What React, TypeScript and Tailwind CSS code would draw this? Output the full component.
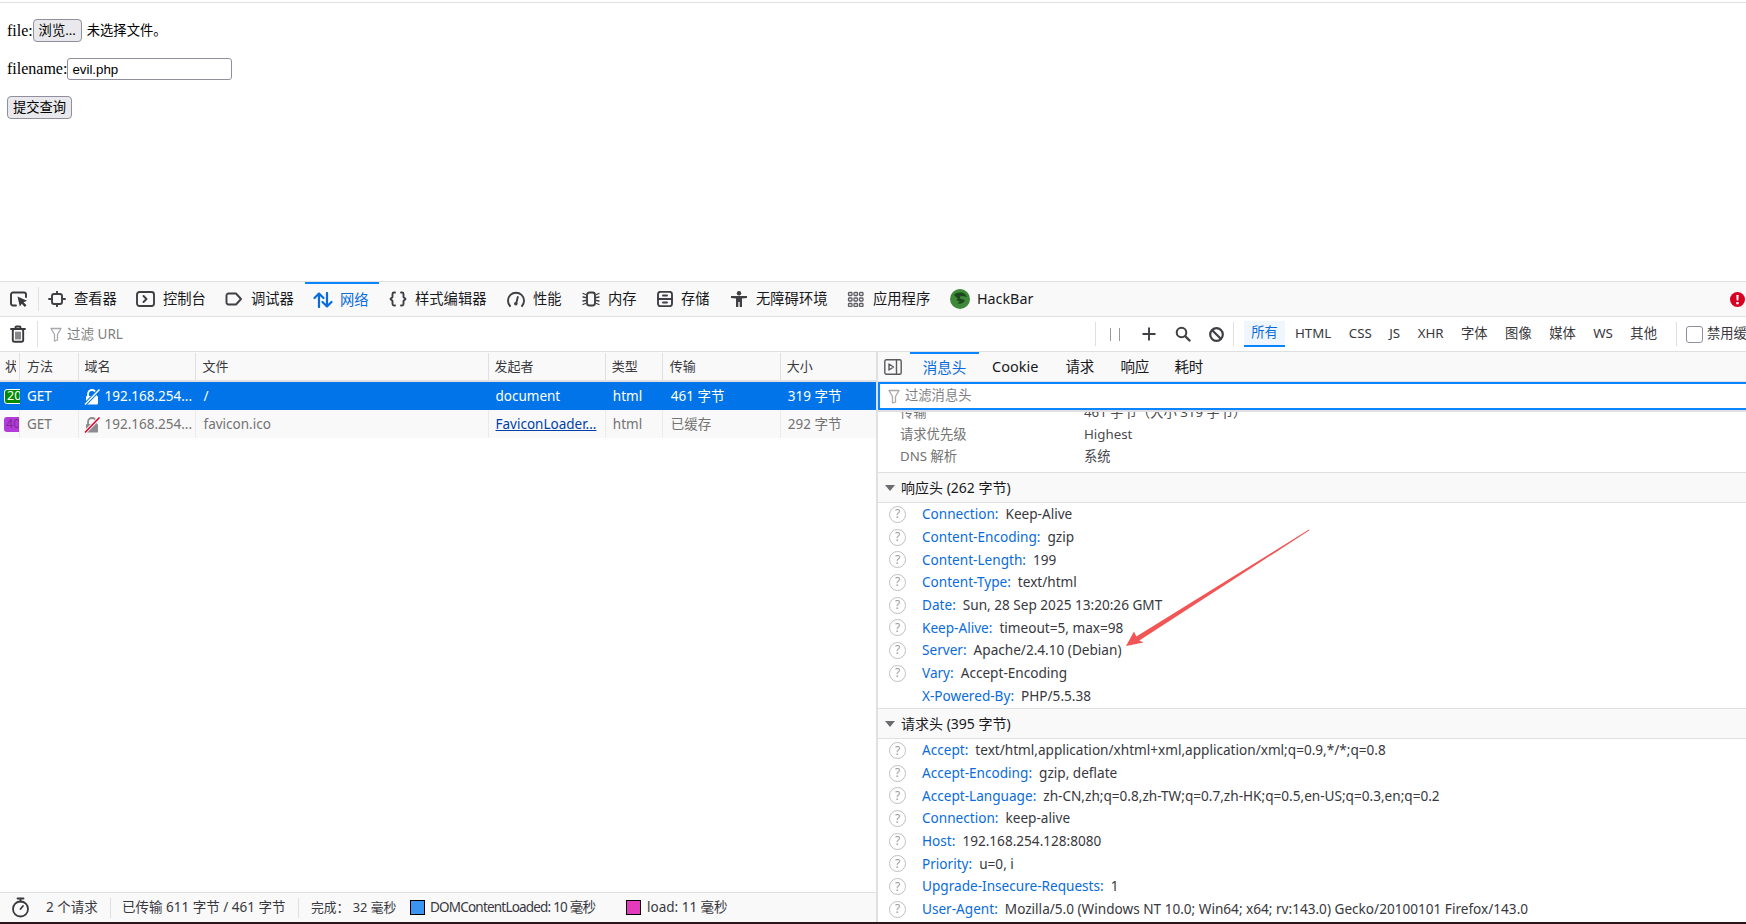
import type { ReactNode } from 'react';

const ui = "font-['Noto_Sans','Noto_Sans_CJK_SC',sans-serif]";

function Ico({ w = 18, h = 16, vw = 18, vh = 16, className = 'text-[#3f3f44]', children }: { w?: number; h?: number; vw?: number; vh?: number; className?: string; children: ReactNode }) {
  return (
    <svg width={w} height={h} viewBox={`0 0 ${vw} ${vh}`} fill="none" stroke="currentColor" strokeWidth="1.900" strokeLinecap="round" strokeLinejoin="round" className={`shrink-0 ${className}`}>
      {children}
    </svg>
  );
}

const InspectorIcon = () => (
  <Ico>
    <rect x="4" y="3" width="10" height="10" rx="2" />
    <path d="M9 0.500V3M9 13v2.500M1 8h3M14 8h3" />
  </Ico>
);
const ConsoleIcon = () => (
  <Ico w={19} vw={19}>
    <rect x="1" y="1" width="17" height="14" rx="2.500" />
    <path d="M7.500 5l3 3-3 3" />
  </Ico>
);
const DebuggerIcon = () => (
  <Ico>
    <path d="M3.500 2.500h7.500l5 5.500-5 5.500H3.500a2 2 0 0 1-2-2v-7a2 2 0 0 1 2-2z" />
  </Ico>
);
const NetworkIcon = () => (
  <Ico w={20} vw={20} className="text-[#0a6cdc]">
    <g strokeWidth="2.200">
      <path d="M6 15V1.500M1.500 6L6 1.500 10.500 6" />
      <path d="M14 1v13.500M9.500 10l4.500 4.500 4.500-4.500" />
    </g>
  </Ico>
);
const StyleIcon = () => (
  <Ico>
    <path d="M6 1.500H5a1.500 1.500 0 0 0-1.500 1.500v3L1.500 8l2 2v3A1.500 1.500 0 0 0 5 14.500h1" />
    <path d="M12 1.500h1A1.500 1.500 0 0 1 14.500 3v3l2 2-2 2v3a1.500 1.500 0 0 1-1.500 1.500h-1" />
  </Ico>
);
const PerfIcon = () => (
  <Ico>
    <path d="M3 15a8 8 0 1 1 12 0" />
    <path d="M10.800 6l-1.500 6" />
    <circle cx="8.800" cy="12.800" r="1.800" fill="currentColor" stroke="none" />
  </Ico>
);
const MemoryIcon = () => (
  <Ico>
    <rect x="5" y="1.500" width="8" height="13" rx="2.500" />
    <path strokeWidth="1.300" d="M3.500 3.500L1 2.500M3.500 6.500L1 6M3.500 9.500L1 10M3.500 12.500L1 13.500M14.500 3.500l2.500-1M14.500 6.500L17 6M14.500 9.500l2.500.5M14.500 12.500l2.500 1" />
  </Ico>
);
const StorageIcon = () => (
  <Ico w={16} vw={16}>
    <rect x="1" y="0.800" width="14" height="14.400" rx="2.500" />
    <path d="M1 8h14M6 4.500h4M6 11.500h4" />
  </Ico>
);
const AccessIcon = () => (
  <Ico>
    <circle cx="9" cy="2.300" r="2.200" fill="currentColor" stroke="none" />
    <path fill="currentColor" stroke="none" d="M1 5h16v2l-5 .5V16h-2.300v-5H8.300v5H6V7.500L1 7z" />
  </Ico>
);
const AppIcon = () => (
  <Ico className="text-[#5f5f64]">
    <g strokeWidth="1.300">
      {[1.500, 7, 12.500].map((y) =>
        [1.500, 7, 12.500].map((x) => <rect key={`${x}-${y}`} x={x} y={y} width="3.500" height="3" rx="0.800" />),
      )}
    </g>
  </Ico>
);
const HackBarIcon = () => (
  <svg width="20" height="20" viewBox="0 0 20 20" className="shrink-0">
    <circle cx="10" cy="10" r="10" fill="#3f8a3a" />
    <path d="M4 6c3-3 8-3 11-1l2 3-5-1c-2 0-3 2-1 3l4 1c-1 3-5 5-8 3l3-1-4-2 2-1-4-4z" fill="#1c4a1d" />
  </svg>
);
const PickIcon = () => (
  <Ico w={18} h={16} vw={18} vh={16} className="text-[#38383d]">
    <path d="M6 14.500H3a2 2 0 0 1-2-2v-9a2 2 0 0 1 2-2h11a2 2 0 0 1 2 2V6" />
    <path fill="currentColor" stroke="none" d="M7.500 5.500L17 9.800l-3.500 1.500 3 3-1.800 1.600-2.900-3.200-2 2.900z" />
  </Ico>
);
const TrashIcon = () => (
  <Ico w={16} h={18} vw={16} vh={18} className="text-[#38383d]">
    <path d="M1 4h14M5.500 4V2.500a1 1 0 0 1 1-1h3a1 1 0 0 1 1 1V4" />
    <rect x="2.800" y="4" width="10.400" height="12.800" rx="1.800" />
    <path strokeWidth="1.200" d="M6 7v7M8 7v7M10 7v7" />
  </Ico>
);
const FunnelIcon = () => (
  <Ico w={12} h={15} vw={12} vh={15} className="text-[#a8a8ad]">
    <path strokeWidth="1.300" d="M1 1.500h10L7.500 7.500v5.500l-3 1V7.500z" />
  </Ico>
);
const SearchIcon = () => (
  <Ico w={16} h={16} vw={16} vh={16}>
    <circle cx="6.500" cy="6.500" r="4.800" strokeWidth="2" />
    <path strokeWidth="2.400" d="M10.500 10.500l4 4" />
  </Ico>
);
const BlockIcon = () => (
  <Ico w={15} h={15} vw={15} vh={15}>
    <circle cx="7.500" cy="7.500" r="6.300" strokeWidth="2.200" />
    <path strokeWidth="2.200" d="M3.200 3.200l8.600 8.600" />
  </Ico>
);
const SidebarIcon = () => (
  <Ico w={18} h={16} vw={18} vh={16} className="text-[#5a5a5f]">
    <rect x="0.800" y="0.800" width="16.400" height="14.400" rx="1.500" strokeWidth="1.400" />
    <path strokeWidth="1.400" d="M12.500 1v14M5 5l4.500 3L5 11z" />
  </Ico>
);
const Stopwatch = () => (
  <Ico w={19} h={21} vw={19} vh={21} className="text-[#38383d]">
    <circle cx="9.500" cy="12" r="7.500" strokeWidth="1.800" />
    <path strokeWidth="1.800" d="M6.500 1.500h6M9.500 1.500v3M9.500 12l2.500-3" />
  </Ico>
);
const HelpIcon = () => (
  <span className="flex h-[17px] w-[17px] shrink-0 items-center justify-center rounded-full border-[1.500px] border-[#bfbfc1] text-[12px] leading-none text-[#9c9c9c]">?</span>
);
const LockIcon = ({ selected }: { selected: boolean }) => (
  <svg width="16" height="16" viewBox="0 0 16 16" fill="none" className="shrink-0">
    <path d="M4 7V5a4 4 0 0 1 8 0v2" stroke={selected ? '#fff' : '#8c8c90'} strokeWidth="1.800" />
    <rect x="2" y="7" width="12" height="8.500" rx="1" fill={selected ? '#fff' : '#8c8c90'} />
    <path d="M15.500 0.500L1 15.500" stroke={selected ? '#0074e8' : '#f9f9fa'} strokeWidth="3.400" />
    <path d="M15.500 0.500L1 15.500" stroke={selected ? '#fff' : '#d70022'} strokeWidth="1.500" />
  </svg>
);

const tabs = [
  { label: '查看器', icon: <InspectorIcon />, cls: 'w-[88px] gap-[8px] pl-[10px]' },
  { label: '控制台', icon: <ConsoleIcon />, cls: 'w-[89px] gap-[8px] pl-[10px]' },
  { label: '调试器', icon: <DebuggerIcon />, cls: 'w-[90px] gap-[8px] pl-[10px]' },
  { label: '网络', icon: <NetworkIcon />, cls: 'w-[74px] gap-[7px] pl-[8px] border-t-2 border-[#0a84ff] text-[#0a6cdc]' },
  { label: '样式编辑器', icon: <StyleIcon />, cls: 'w-[118px] gap-[8px] pl-[10px]' },
  { label: '性能', icon: <PerfIcon />, cls: 'w-[75px] gap-[8px] pl-[10px]' },
  { label: '内存', icon: <MemoryIcon />, cls: 'w-[75px] gap-[8px] pl-[10px]' },
  { label: '存储', icon: <StorageIcon />, cls: 'w-[73px] gap-[8px] pl-[10px]' },
  { label: '无障碍环境', icon: <AccessIcon />, cls: 'w-[117px] gap-[8px] pl-[10px]' },
  { label: '应用程序', icon: <AppIcon />, cls: 'w-[103px] gap-[8px] pl-[10px]' },
  { label: 'HackBar', icon: <HackBarIcon />, cls: 'w-[110px] gap-[7px] pl-[10px]' },
];

const filters = ['HTML', 'CSS', 'JS', 'XHR', '字体', '图像', '媒体', 'WS', '其他'];

const columns = [
  { label: '状态', cls: 'pl-[5px]' },
  { label: '方法', cls: 'pl-[7px]' },
  { label: '域名', cls: 'pl-[6px]' },
  { label: '文件', cls: 'pl-[7px]' },
  { label: '发起者', cls: 'pl-[6px]' },
  { label: '类型', cls: 'pl-[6px]' },
  { label: '传输', cls: 'pl-[7px]' },
  { label: '大小', cls: 'pl-[6px]' },
];
const tableGrid = 'grid grid-cols-[20px_58.500px_117px_293px_117.300px_57px_118px_94.700px]';

const requests = [
  { status: '200', method: 'GET', host: '192.168.254...', file: '/', initiator: 'document', type: 'html', transfer: '461 字节', size: '319 字节', selected: true },
  { status: '404', method: 'GET', host: '192.168.254...', file: 'favicon.ico', initiator: 'FaviconLoader...', type: 'html', transfer: '已缓存', size: '292 字节', selected: false },
];

const responseHeaders = [
  ['Connection', 'Keep-Alive'],
  ['Content-Encoding', 'gzip'],
  ['Content-Length', '199'],
  ['Content-Type', 'text/html'],
  ['Date', 'Sun, 28 Sep 2025 13:20:26 GMT'],
  ['Keep-Alive', 'timeout=5, max=98'],
  ['Server', 'Apache/2.4.10 (Debian)'],
  ['Vary', 'Accept-Encoding'],
  ['X-Powered-By', 'PHP/5.5.38'],
];
const requestHeaders = [
  ['Accept', 'text/html,application/xhtml+xml,application/xml;q=0.9,*/*;q=0.8'],
  ['Accept-Encoding', 'gzip, deflate'],
  ['Accept-Language', 'zh-CN,zh;q=0.8,zh-TW;q=0.7,zh-HK;q=0.5,en-US;q=0.3,en;q=0.2'],
  ['Connection', 'keep-alive'],
  ['Host', '192.168.254.128:8080'],
  ['Priority', 'u=0, i'],
  ['Upgrade-Insecure-Requests', '1'],
  ['User-Agent', 'Mozilla/5.0 (Windows NT 10.0; Win64; x64; rv:143.0) Gecko/20100101 Firefox/143.0'],
];

function SectionHead({ children }: { children: ReactNode }) {
  return (
    <div className="flex h-[31px] items-center border-y border-[#e0e0e2] bg-[#f9f9fa] text-[14px] text-[#18181a]">
      <span className="ml-[7px] mr-[6px] h-0 w-0 border-x-[5px] border-t-[6px] border-x-transparent border-t-[#6b6b70]" />
      {children}
    </div>
  );
}

function HeaderRow({ name, value, noHelp }: { name: string; value: string; noHelp?: boolean }) {
  return (
    <div className="flex h-[22.700px] items-center whitespace-nowrap text-[13.600px]">
      <span className="flex w-[44px] pl-[11px]">{!noHelp && <HelpIcon />}</span>
      <span className="text-[#0a6cdc]">{name}:</span>
      <span className="ml-[7px] text-[#38383d]">{value}</span>
    </div>
  );
}

export default function App() {
  return (
    <div className={`relative flex h-[924px] w-[1746px] flex-col overflow-hidden bg-white ${ui}`}>
      <div className="h-[3px] shrink-0 border-b border-[#e0e0e2]" />

      {/* page under test */}
      <div className="flex h-[278px] shrink-0 flex-col gap-4 pl-[7px] pt-4 font-['Liberation_Serif','Noto_Sans_CJK_SC',serif] text-[16px] text-black">
        <div className="flex h-[23px] items-center">
          file:
          <button className={`h-[23px] w-[49px] rounded-[4px] border border-[#8f8f9d] bg-[#e9e9ed] text-[13.300px] ${ui}`}>浏览...</button>
          <span className={`ml-[5px] text-[13.300px] ${ui}`}>未选择文件。</span>
        </div>
        <div className="flex h-[22px] items-center">
          filename:
          <input readOnly value="evil.php" className="h-[22px] w-[165px] rounded-[3px] border border-[#8f8f9d] px-[4px] font-['Liberation_Sans',sans-serif] text-[13.300px]" />
        </div>
        <button className={`h-[23px] w-[65px] rounded-[4px] border border-[#8f8f9d] bg-[#e9e9ed] text-[13.300px] ${ui}`}>提交查询</button>
      </div>

      {/* devtools tabs */}
      <div className="flex h-[36px] shrink-0 items-stretch border-y border-[#e0e0e2] bg-[#f9f9fa] text-[14.300px] text-[#18181a]">
        <div className="flex w-[38px] items-center pl-[10px]">
          <PickIcon />
          <span className="ml-[9.500px] h-[24px] border-l border-[#e0e0e2]" />
        </div>
        {tabs.map((t) => (
          <div key={t.label} className={`flex items-center ${t.cls}`}>
            {t.icon}
            <span className="whitespace-nowrap">{t.label}</span>
          </div>
        ))}
        <div className="ml-auto flex items-center pr-[1px]">
          <svg width="15" height="15" viewBox="0 0 15 15">
            <circle cx="7.500" cy="7.500" r="7.500" fill="#d70022" />
            <path d="M6.300 3h2.400l-.4 5.500H6.700zM6.300 10h2.400v2.200H6.300z" fill="#fff" />
          </svg>
        </div>
      </div>

      {/* request filter row */}
      <div className="flex h-[35px] shrink-0 items-center border-b border-[#e0e0e2] text-[13.300px] text-[#38383d]">
        <div className="flex w-[38px] justify-center border-r border-[#e0e0e2] py-[4px] pr-[1px]">
          <TrashIcon />
        </div>
        <div className="flex flex-1 items-center gap-[5px] pl-[12px] text-[13.500px] text-[#7f7f83]">
          <FunnelIcon />
          过滤 URL
        </div>
        <div className="flex h-[24px] items-center border-l border-[#e0e0e2] pl-[14px]">
          <span className="h-[13px] w-[10px] border-x border-[#9a9a9e]" />
          <svg width="14" height="14" viewBox="0 0 14 14" className="ml-[22px] text-[#3f3f44]" stroke="currentColor" strokeWidth="1.900">
            <path d="M7 0.500v13M0.500 7h13" />
          </svg>
          <span className="ml-[19px]"><SearchIcon /></span>
          <span className="ml-[18px]"><BlockIcon /></span>
          <span className="ml-[9px] h-[24px] border-l border-[#e0e0e2]" />
        </div>
        <div className="ml-[10px] flex h-[26px] w-[41px] items-center justify-center border-b-2 border-[#0a84ff] bg-[#f0f6fe] text-[#0a6cdc]">所有</div>
        <div className="ml-[10px] flex w-[362px] items-center justify-between whitespace-nowrap">
          {filters.map((f) => (
            <span key={f}>{f}</span>
          ))}
        </div>
        <span className="ml-[19px] h-[24px] border-l border-[#e0e0e2]" />
        <span className="ml-[9px] h-[17px] w-[17px] shrink-0 rounded-[3px] border border-[#8f8f9d] bg-white" />
        <span className="ml-[4px] w-[39px] overflow-hidden whitespace-nowrap">禁用缓存</span>
      </div>

      <div className="flex min-h-0 flex-1">
        {/* request list */}
        <div className="flex w-[876px] shrink-0 flex-col">
          <div className={`${tableGrid} h-[30px] shrink-0 border-b-2 border-[#e0e0e2] bg-[#f9f9fa] pt-px text-[13px] text-[#38383d]`}>
            {columns.map((c, i) => (
              <div key={c.label} className={`flex items-center whitespace-nowrap border-r border-[#e0e0e2] last:border-r-0 ${c.cls}`}>
                {i === 0 ? <span className="w-[10.500px] overflow-hidden">{c.label}</span> : c.label}
              </div>
            ))}
          </div>
          {requests.map((r) => {
            const cell = r.selected ? 'pt-px text-white' : 'pt-px border-r border-[#ebebed] text-[#737373]';
            return (
              <div key={r.file} className={`${tableGrid} h-[28px] items-stretch whitespace-nowrap text-[13.500px] ${r.selected ? 'bg-[#0074e8]' : 'bg-[#f9f9fa]'}`}>
                <div className={`flex items-center overflow-hidden pl-[4px] ${cell}`}>
                  <span className={`flex h-[15px] w-[24px] shrink-0 items-center rounded-[3px] pl-[2px] text-[12.500px] leading-none ${r.selected ? 'border border-white bg-[#058b00] text-white' : 'bg-[#b33bdb] text-[#7b2a96]'}`}>{r.status}</span>
                </div>
                <div className={`flex items-center pl-[7px] ${cell}`}>{r.method}</div>
                <div className={`flex items-center gap-[5px] pl-[5px] ${cell}`}>
                  <LockIcon selected={r.selected} />
                  {r.host}
                </div>
                <div className={`flex items-center pl-[8px] ${cell}`}>{r.file}</div>
                <div className={`flex items-center pl-[7px] ${cell}`}>
                  {r.selected ? r.initiator : <span className="text-[#003eaa] underline">{r.initiator}</span>}
                </div>
                <div className={`flex items-center pl-[7px] ${cell}`}>{r.type}</div>
                <div className={`flex items-center pl-[8px] ${cell}`}>{r.transfer}</div>
                <div className={`flex items-center pl-[7px] pt-px ${r.selected ? 'text-white' : 'text-[#737373]'}`}>{r.size}</div>
              </div>
            );
          })}
          <div className="flex-1" />
          <div className="flex h-[30px] shrink-0 items-center whitespace-nowrap border-t border-[#e0e0e2] bg-[#f9f9fa] text-[13.500px] text-[#38383d]">
            <span className="ml-[11px] w-[35px]"><Stopwatch /></span>
            <span className="w-[64px]">2 个请求</span>
            <span className="h-[20px] border-l border-[#e0e0e2]" />
            <span className="ml-[11px] w-[176px]">已传输 611 字节 / 461 字节</span>
            <span className="h-[20px] border-l border-[#e0e0e2]" />
            <span className="ml-[12px] w-[99px] text-[12.800px]">完成： 32 毫秒</span>
            <span className="h-[15px] w-[15px] border border-black bg-[#3a95f0]" />
            <span className="ml-[5px] w-[196px] tracking-[-0.800px]">DOMContentLoaded: 10 毫秒</span>
            <span className="h-[15px] w-[15px] border border-black bg-[#e43bbd]" />
            <span className="ml-[6px]">load: 11 毫秒</span>
          </div>
        </div>

        {/* headers sidebar */}
        <div className="flex min-w-0 flex-1 flex-col border-l-2 border-[#e0e0e2]">
          <div className="flex h-[30px] shrink-0 items-center border-b border-[#e0e0e2] bg-[#f9f9fa] text-[14.500px] text-[#18181a]">
            <span className="ml-[6px]"><SidebarIcon /></span>
            <div className="ml-[8px] flex h-full w-[69px] items-center justify-center border-t-2 border-[#0a84ff] text-[#0a6cdc]">消息头</div>
            <span className="ml-[13px]">Cookie</span>
            <span className="ml-[27px]">请求</span>
            <span className="ml-[26px]">响应</span>
            <span className="ml-[25px]">耗时</span>
          </div>
          <div className="flex h-[28px] shrink-0 items-center gap-[5px] border-y-2 border-l-2 border-[#0a84ff] pl-[8px] text-[13.300px] text-[#7f7f83]">
            <FunnelIcon />
            过滤消息头
          </div>
          <div className="min-h-0 flex-1 overflow-hidden border-t-2 border-[#e0e0e2]">
            <div className="-mt-[10px] text-[13.300px] text-[#4a4a4f]">
              {[
                ['传输', '461 字节（大小 319 字节）'],
                ['请求优先级', 'Highest'],
                ['DNS 解析', '系统'],
              ].map(([label, value]) => (
                <div key={label} className="flex h-[22px] items-center whitespace-nowrap">
                  <span className="w-[206px] pl-[22px] text-[#737373]">{label}</span>
                  {value}
                </div>
              ))}
            </div>
            <div className="h-[4px]" />
            <SectionHead>响应头 (262 字节)</SectionHead>
            {responseHeaders.map(([name, value]) => (
              <HeaderRow key={name} name={name} value={value} noHelp={name === 'X-Powered-By'} />
            ))}
            <div className="h-[1px]" />
            <SectionHead>请求头 (395 字节)</SectionHead>
            {requestHeaders.map(([name, value]) => (
              <HeaderRow key={name} name={name} value={value} />
            ))}
          </div>
        </div>
      </div>

      {/* desktop wallpaper peeking through under the window */}
      <div className="h-[2px] shrink-0 bg-[#2b1518]" />

      {/* annotation arrow drawn over the shot */}
      <svg width="1746" height="924" className="pointer-events-none absolute left-0 top-0">
        <polygon points="1309.500,530.300 1139.300,640.500 1143.500,642.500 1126,646 1134,631.500 1136.300,636.600 1308.900,529.500" fill="#f25555" />
      </svg>
    </div>
  );
}
